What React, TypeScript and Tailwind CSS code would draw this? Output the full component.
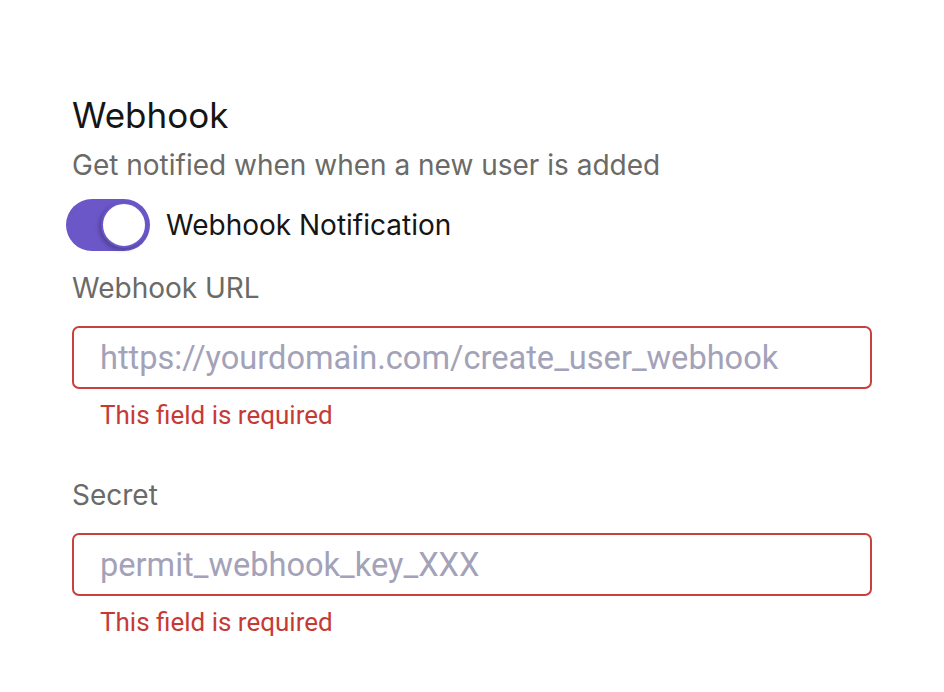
import { useState } from "react";

const Field = ({ label, placeholder }: { label: string; placeholder: string }) => {
  return (
    <div className="flex flex-col">
      <label className="text-[28px] leading-[36px] text-[#6b6a66]">{label}</label>
      <input
        placeholder={placeholder}
        className="mt-[20px] h-[63px] w-[800px] rounded-[7px] border-2 border-[#c9413b] bg-white px-[26px] text-[32.6px] outline-none placeholder:text-[#a3a2b8]"
        style={{ fontFamily: "Roboto, sans-serif" }}
      />
      <span
        className="mt-[11px] pl-[28px] text-[26px] leading-[30px] text-[#c63a35]"
        style={{ fontFamily: "Roboto, sans-serif" }}
      >
        This field is required
      </span>
    </div>
  );
};

const App = () => {
  const [enabled, setEnabled] = useState(true);

  return (
    <div className="min-h-[692px] w-[944px] bg-white font-['Inter',sans-serif]">
      <div className="flex flex-col pl-[72px] pt-[94px]">
        <h1 className="text-[35px] leading-[42px] text-[#151515]">Webhook</h1>
        <p className="mt-[11px] text-[28px] leading-[36px] text-[#6b6a66]">
          Get notified when when a new user is added
        </p>

        <div className="-ml-[6px] mt-[16px] flex items-center gap-[16px]">
          <button
            onClick={() => setEnabled(!enabled)}
            className={`flex h-[52px] w-[84px] items-center rounded-full p-[3px] ${
              enabled ? "justify-end bg-[#6b57c8]" : "justify-start bg-gray-300"
            }`}
          >
            <span className="h-[46px] w-[46px] rounded-full border-2 border-[#6b57c8] bg-white shadow-[-2px_2px_4px_rgba(0,0,0,0.25)]" />
          </button>
          <span className="text-[28px] leading-[36px] text-[#151515]">Webhook Notification</span>
        </div>

        <div className="mt-[19px] flex flex-col gap-[47px]">
          <Field label="Webhook URL" placeholder="https://yourdomain.com/create_user_webhook" />
          <Field label="Secret" placeholder="permit_webhook_key_XXX" />
        </div>
      </div>
    </div>
  );
};

export default App;
